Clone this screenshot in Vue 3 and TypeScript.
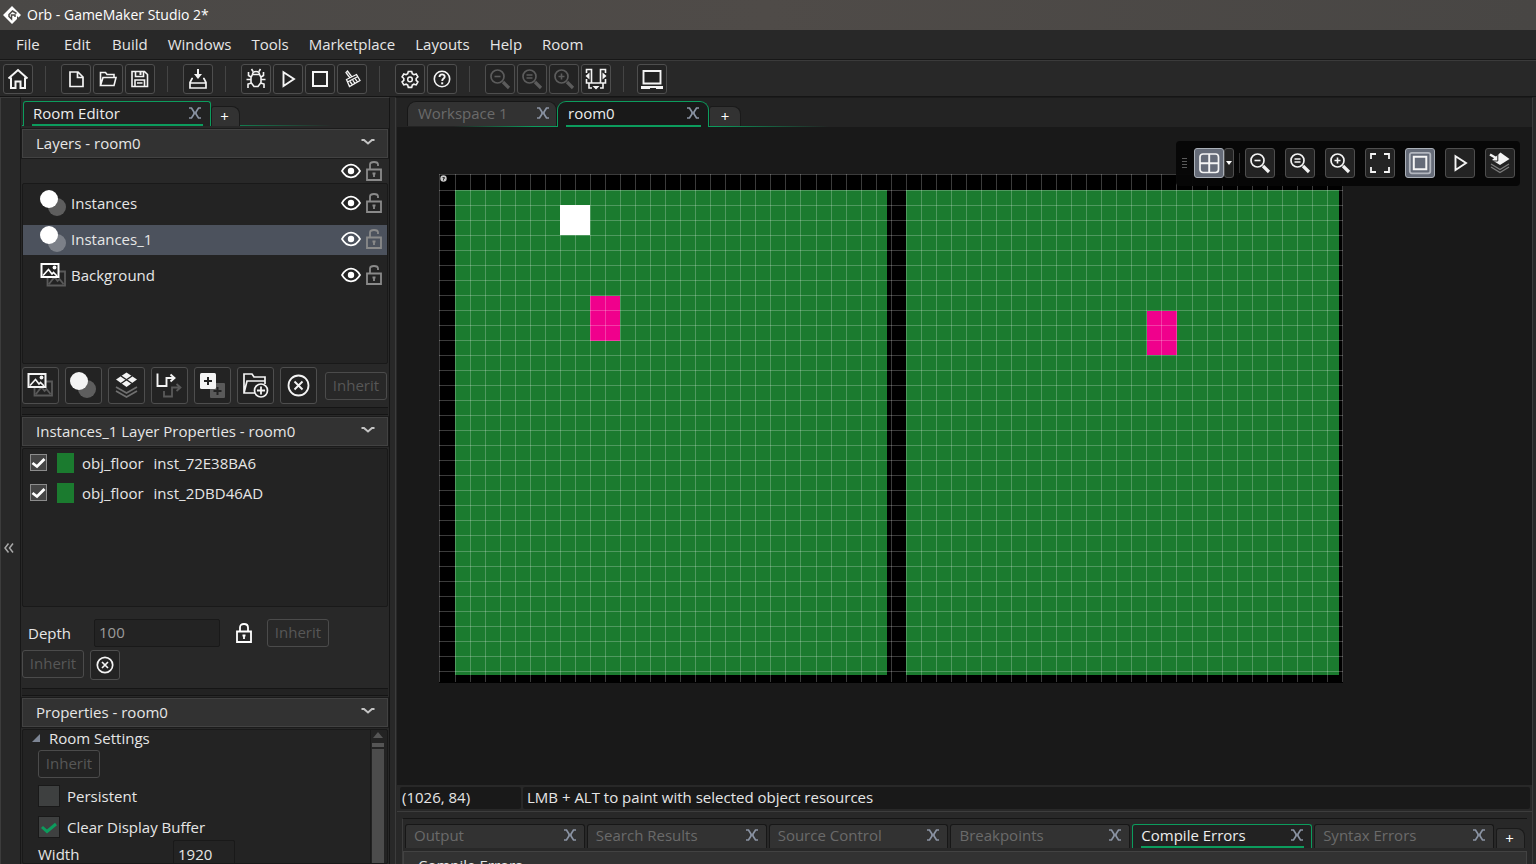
<script setup lang="ts">
import { ref } from 'vue'

interface Layer { name: string; kind: string }
interface Instance { object: string; id: string; enabled: boolean }

const menus = ['File', 'Edit', 'Build', 'Windows', 'Tools', 'Marketplace', 'Layouts', 'Help', 'Room']

const lens = '<circle cx="12.5" cy="12.5" r="6.5" stroke-width="1.7"/><path d="M18 18l6 6" stroke-width="3.2"/>'

const icons: Record<string, string> = {
  home: '<path d="M5.5 14.5L15 6l9.500 8.500M8 13.500V24h4.500v-6.500h5V24H22V13.500" stroke-width="2"/>',
  file: '<path d="M9 8h8l5 5v9.500H9zM16.500 8.500v5H22" stroke-width="1.700"/>',
  open: '<path d="M7.500 21.500V8.500h5l1.500 2h7v3M7.500 21.500l2.500-8h13l-2 8z" stroke-width="1.600"/>',
  save: '<path d="M7 7.500h12.500l3 3v12H7zM10.500 7.500v5h8v-5M10 22.500v-6.500h9.500v6.500M12 19h5.500" stroke-width="1.600"/><path d="M15.500 8v3" stroke-width="2"/>',
  export: '<path d="M10 14.500H9l-2 4V24h16v-5.500l-2-4h-1M7 19h16" stroke-width="1.700"/><path d="M15 5v8" stroke-width="2"/><path d="M11 10h8l-4 5z" fill="currentColor" stroke="none"/>',
  bug: '<path d="M11.500 10.500h7l1.500 3v5l-3 4h-4l-3-4v-5zM11.500 10.500c0-2 1.500-3 3.500-3s3.500 1 3.500 3M12 7.500l-1.500-2.500M18 7.500l1.500-2.500M10 13l-2.500-1.500V8M20 13l2.500-1.500V8M10 15.500H5.500M20 15.500h4.500M10.500 19L7 20v4M19.500 19l3.500 1v4" stroke-width="1.600"/>',
  play: '<path d="M10.500 8.200V22L21 15z" stroke-width="1.900"/>',
  stop: '<path d="M8 8h14v14H8z" stroke-width="2"/>',
  clean: '<path d="M9.500 15.500l10-5 3.500 6-10.500 6zM10.500 18l10.500-5.500M13 14L9 8.500l1.500-1.500 4 5.500M13 17.500l2.500 3.500M15.700 16.200l2.300 3.300M18.300 14.800l2.200 3.200" stroke-width="1.300"/>',
  gear: '<path d="M13.300 7.500h3.400l.600 2.300 1.600.900 2.300-.700 1.700 2.900-1.700 1.600v1.900l1.700 1.600-1.700 2.900-2.300-.700-1.600.900-.600 2.300h-3.400l-.600-2.300-1.600-.900-2.300.700L7.100 18l1.700-1.600v-1.900l-1.700-1.600L8.800 10l2.300.700 1.600-.900z" stroke-width="1.600"/><circle cx="15" cy="15.400" r="2.300" stroke-width="1.500"/>',
  help: '<circle cx="15" cy="15" r="7.700" stroke-width="1.600"/><path d="M12.500 13c0-3.500 5.200-3.300 5.200-.300 0 1.900-2.500 1.800-2.500 4.300" stroke-width="1.900"/><path d="M14.200 18.300h2v2h-2z" fill="currentColor" stroke="none"/>',
  zoomOut: lens + '<path d="M9.500 12.500h6" stroke-width="1.600"/>',
  zoomReset: lens + '<path d="M9.500 11h6M9.500 14h6" stroke-width="1.500"/>',
  zoomIn: lens + '<path d="M9.500 12.500h6M12.500 9.500v6" stroke-width="1.600"/>',
  dock: '<path d="M5.500 9V5.500h5V19h9V5.500h5V9M5.500 15v4h5M24.500 15v4h-5M11 24H8v-4.500M19 24h3v-4.500" stroke-width="1.600"/><path d="M4.500 12l4-3.500v7zM25.500 12l-4-3.500v7zM11.500 22h7L15 25.500z" fill="currentColor" stroke="none"/>',
  laptop: '<path d="M6.500 7h17v12.500h-17z" stroke-width="1.900"/><path d="M4 23.500h22" stroke-width="3"/><path d="M13 24.500h6" stroke="#252525" stroke-width="1"/>',
  grid: '<rect x="6" y="6" width="18.500" height="18.500" rx="3" stroke-width="1.700"/><path d="M15.200 6v18.500M6 15.200h18.500" stroke-width="1.900"/>',
  fit: '<path d="M6 11V6h5M19 6h5v5M24 19v5h-5M11 24H6v-5" stroke-width="1.800"/>',
  frame: '<rect x="4.800" y="4.800" width="20.500" height="20.500" rx="2" stroke="#b3b7bf" stroke-width="1.800"/><path d="M8.800 8.800h12.500v12.500H8.800z" stroke-width="2"/>',
  stack: '<path d="M6 19l9 5.500 9-5.500M6 16l9 5.500 9-5.500" stroke="#7b7b7b" stroke-width="1.400"/><path d="M15.500 4.500l9 6.500-9.500 6-8-5z" fill="currentColor" stroke="none"/><path d="M5 6.500l6 3.500" stroke-width="2.400"/><path d="M12.800 6v7H7" stroke="#232323" stroke-width="1"/>',
  image: '<path d="M12.500 14.500h17.500v14H12.500zM14 27l5.500-7 3 4 2-2 4 5" stroke="#5a5a5a" stroke-width="1.800"/><path d="M6.500 7h17v13h-17z" stroke-width="2" fill="#232323"/><path d="M8 18.500l5.500-6 3.500 4.500 1.500-1.500 3.500 3.500" stroke-width="1.600"/><circle cx="19.500" cy="10.500" r="1.900" fill="currentColor" stroke="none"/>',
  circles: '<circle cx="22" cy="22" r="9" fill="#fff" fill-opacity=".27" stroke="none"/><circle cx="14" cy="14" r="9" fill="currentColor" stroke="none"/>',
  tiles: '<path d="M8 20l10.500 6L29 20M8 24l10.500 6L29 24" stroke="#707070" stroke-width="1.700"/><path d="M18.500 5.500L29 12.500l-10.500 7.500L8 12.500z" fill="currentColor" stroke="none"/><path d="M13 9l11 7.500M24 9l-11 7.500" stroke="#232323" stroke-width="1.500"/>',
  path: '<path d="M13 24v5.500h8V20.500h7M25.500 17l4 3.500-4 3.500" stroke="#5a5a5a" stroke-width="1.800"/><path d="M6.500 6.500v12.500h9v-8h7M19.500 7.500l4 3.500-4 3.500" stroke-width="1.900"/>',
  assets: '<rect x="16" y="16" width="15" height="15" rx="1" fill="#5a5a5a" stroke="none"/><path d="M19.500 24h8M23.500 20v8" stroke="#232323" stroke-width="2"/><rect x="6" y="6" width="16" height="16" rx="1.500" fill="currentColor" stroke="none"/><path d="M10 14h8M14 10v8" stroke="#232323" stroke-width="2"/>',
  folder: '<path d="M18 26H7V7h8l2 3h11v7M7 26l3-12h17M10 14h18" stroke-width="1.700"/><circle cx="24" cy="23.500" r="6.500" fill="#232323" stroke-width="1.700"/><path d="M20 23.500h8M24 19.500v8" stroke-width="1.800"/>',
  remove: '<circle cx="18.500" cy="18.500" r="10" stroke-width="1.800"/><path d="M14.500 14.500l8 8M22.500 14.500l-8 8" stroke-width="1.900"/>',
  removeSmall: '<circle cx="15" cy="15" r="7.700" stroke-width="1.700"/><path d="M12 12l6 6M18 12l-6 6" stroke-width="1.700"/>',
}

const toolGroups: { icon: string; label: string; dim?: boolean }[][] = [
  [{ icon: 'home', label: 'Start page' }],
  [{ icon: 'file', label: 'New project' }, { icon: 'open', label: 'Open project' }, { icon: 'save', label: 'Save project' }],
  [{ icon: 'export', label: 'Create executable' }],
  [{ icon: 'bug', label: 'Debug' }, { icon: 'play', label: 'Run' }, { icon: 'stop', label: 'Stop' }, { icon: 'clean', label: 'Clean' }],
  [{ icon: 'gear', label: 'Game options' }, { icon: 'help', label: 'Help' }],
  [{ icon: 'zoomOut', label: 'Zoom out', dim: true }, { icon: 'zoomReset', label: 'Reset zoom', dim: true }, { icon: 'zoomIn', label: 'Zoom in', dim: true }, { icon: 'dock', label: 'Docks' }],
  [{ icon: 'laptop', label: 'Laptop mode' }],
]

const canvasTools = [
  { icon: 'zoomOut', label: 'Zoom out' },
  { icon: 'zoomReset', label: 'Reset zoom' },
  { icon: 'zoomIn', label: 'Zoom in' },
  { icon: 'fit', label: 'Fit to view' },
  { icon: 'frame', label: 'Room bounds', on: true },
  { icon: 'play', label: 'Play animation' },
  { icon: 'stack', label: 'Layer selection' },
]

const layerTools = ['image', 'circles', 'tiles', 'path', 'assets', 'folder', 'remove']
const layers: Layer[] = [
  { name: 'Instances', kind: 'circles' },
  { name: 'Instances_1', kind: 'circles' },
  { name: 'Background', kind: 'image' },
]
const activeLayer = ref('Instances_1')

const instances = ref<Instance[]>([
  { object: 'obj_floor', id: 'inst_72E38BA6', enabled: true },
  { object: 'obj_floor', id: 'inst_2DBD46AD', enabled: true },
])

const depth = ref('100')
const roomWidth = ref('1920')
const persistent = ref(false)
const clearBuffer = ref(true)

const outputTabs = ['Output', 'Search Results', 'Source Control', 'Breakpoints', 'Compile Errors', 'Syntax Errors']
const activeOutput = ref('Compile Errors')

// 32-unit grid of a 1920x1080 room at 47% zoom
const CELL = 15.04
const columns = Array.from({ length: 61 }, (_, i) => (i === 0 ? 0 : 1 + Math.floor(i * CELL)))
const rows = Array.from({ length: 34 }, (_, i) => (i === 0 ? 0 : 1 + Math.floor(i * CELL)))
</script>

<template>
  <div class="app">
    <header class="title">
      <svg class="logo" viewBox="0 0 18 18"><path d="M9 0l9 9-2.500 2.500L14 10v3l-5 5-9-9z" fill="#fff" /><path d="M13.500 7.500L9.500 5 6 8.500v2L8.500 13v-4H12v2" fill="none" stroke="#4b4947" stroke-width="1.500" /></svg>
      <span>Orb - GameMaker Studio 2*</span>
    </header>

    <nav class="menu">
      <button v-for="m in menus" :key="m" type="button">{{ m }}</button>
    </nav>

    <div class="toolbar">
      <div v-for="(g, i) in toolGroups" :key="i" class="group">
        <button v-for="t in g" :key="t.icon" type="button" class="tool" :class="{ dim: t.dim }" :aria-label="t.label">
          <svg viewBox="0 0 30 30" v-html="icons[t.icon]" />
        </button>
      </div>
    </div>

    <div class="body">
      <button type="button" class="rail" aria-label="Expand left dock">
        <svg viewBox="0 0 10 10"><path d="M4.500 0.500L1 5l3.500 4.500M9 .5L5.500 5 9 9.500" /></svg>
      </button>

      <aside class="side">
        <div class="tabs side-tabs">
          <div class="tab active"><span>Room Editor</span><button type="button" class="close" aria-label="Close"><svg viewBox="0 0 12 12"><path d="M0 1h2.500L5 5v2l-2.500 4H0M12 1H9.500L7 5v2l2.500 4H12M5 6h2" /></svg></button></div>
          <button type="button" class="plus">+</button>
        </div>

        <button type="button" class="head">Layers - room0<svg viewBox="0 0 14 7"><path d="M.5 1H3l4 3.500L11 1h2.500" /></svg></button>
        <div class="all-layers">
          <svg class="eye" viewBox="0 0 20 16"><path d="M1 8c5-8.500 13-8.500 18 0-5 8.500-13 8.500-18 0z" /><circle cx="10" cy="8" r="3.200" /></svg>
          <svg class="lock" viewBox="0 0 16 20"><path d="M4 8V3.500Q4 1 8 1t4 2.500V5M1 8.500h14v10.500H1z" /><path d="M8 11.500v4.500M6.500 12.500h3" /></svg>
        </div>
        <div class="well layer-list">
          <div v-for="l in layers" :key="l.name" class="layer" :class="{ selected: l.name === activeLayer }" @click="activeLayer = l.name">
            <svg class="kind" viewBox="5 5 26 26" v-html="icons[l.kind]" />
            <span>{{ l.name }}</span>
            <svg class="eye" viewBox="0 0 20 16"><path d="M1 8c5-8.500 13-8.500 18 0-5 8.500-13 8.500-18 0z" /><circle cx="10" cy="8" r="3.200" /></svg>
            <svg class="lock" viewBox="0 0 16 20"><path d="M4 8V3.500Q4 1 8 1t4 2.500V5M1 8.500h14v10.500H1z" /><path d="M8 11.500v4.500M6.500 12.500h3" /></svg>
          </div>
        </div>
        <div class="layer-tools">
          <button v-for="t in layerTools" :key="t" type="button" class="tool big" :aria-label="t"><svg viewBox="0 0 37 37" v-html="icons[t]" /></button>
          <button type="button" class="inherit" disabled>Inherit</button>
        </div>
        <div class="divider" />

        <button type="button" class="head">Instances_1 Layer Properties - room0<svg viewBox="0 0 14 7"><path d="M.5 1H3l4 3.500L11 1h2.500" /></svg></button>
        <div class="well instance-list">
          <label v-for="inst in instances" :key="inst.id" class="instance">
            <input v-model="inst.enabled" type="checkbox" />
            <svg class="tick" viewBox="0 0 17 17"><path v-if="inst.enabled" d="M2.500 9l4.500 3.500L14.500 5" /></svg>
            <i class="swatch" /><span class="obj">{{ inst.object }}</span><span>{{ inst.id }}</span>
          </label>
        </div>
        <div class="depth">
          <label for="depth">Depth</label>
          <input id="depth" v-model="depth" type="text" />
          <svg class="lock" viewBox="0 0 16 20"><path d="M4 8V4.500Q4 1 8 1t4 3.500V8M1 8.500h14v10.500H1z" /><path d="M8 11.500v4.500M6.500 12.500h3" /></svg>
          <button type="button" class="inherit" disabled>Inherit</button>
        </div>
        <div class="inherit-row">
          <button type="button" class="inherit" disabled>Inherit</button>
          <button type="button" class="tool" aria-label="Clear"><svg viewBox="0 0 30 30" v-html="icons.removeSmall" /></button>
        </div>
        <div class="divider" />

        <button type="button" class="head">Properties - room0<svg viewBox="0 0 14 7"><path d="M.5 1H3l4 3.500L11 1h2.500" /></svg></button>
        <div class="well settings">
          <div class="settings-body">
            <div class="section"><svg viewBox="0 0 8 8"><path d="M8 0v8H0z" /></svg>Room Settings</div>
            <button type="button" class="inherit" disabled>Inherit</button>
            <label class="check"><input v-model="persistent" type="checkbox" /><svg viewBox="0 0 20 20"><path v-if="persistent" d="M3 10l5 4.500L17 7" /></svg>Persistent</label>
            <label class="check"><input v-model="clearBuffer" type="checkbox" /><svg viewBox="0 0 20 20"><path v-if="clearBuffer" d="M3 10l5 4.500L17 7" /></svg>Clear Display Buffer</label>
            <div class="field"><label for="room-width">Width</label><input id="room-width" v-model="roomWidth" type="text" /></div>
          </div>
          <div class="scroll"><svg viewBox="0 0 10 6"><path d="M5 0l5 6H0z" /></svg><i class="nub" /><i class="thumb" /></div>
        </div>
      </aside>

      <main class="main">
        <div class="tabs work-tabs">
          <div class="tab round first"><span>Workspace 1</span><button type="button" class="close" aria-label="Close"><svg viewBox="0 0 12 12"><path d="M0 1h2.500L5 5v2l-2.500 4H0M12 1H9.500L7 5v2l2.500 4H12M5 6h2" /></svg></button></div>
          <div class="tab round active"><span>room0</span><button type="button" class="close" aria-label="Close"><svg viewBox="0 0 12 12"><path d="M0 1h2.500L5 5v2l-2.500 4H0M12 1H9.500L7 5v2l2.500 4H12M5 6h2" /></svg></button></div>
          <button type="button" class="plus">+</button>
        </div>

        <section class="canvas">
          <svg class="room" width="904" height="509" viewBox="0 0 904 509" shape-rendering="crispEdges">
            <rect width="904" height="509" fill="#000" />
            <rect x="16" y="16" width="432" height="485" fill="#1b7b2f" />
            <rect x="467" y="16" width="433" height="485" fill="#1b7b2f" />
            <rect x="151" y="122" width="30" height="45" fill="#f0008c" />
            <rect x="708" y="137" width="30" height="44" fill="#f0008c" />
            <g fill="#fff" fill-opacity=".23">
              <rect v-for="x in columns" :key="'c' + x" :x="x" y="0" width="1" height="508" />
              <rect v-for="y in rows" :key="'r' + y" x="0" :y="y" width="904" height="1" />
            </g>
            <rect x="121" y="31" width="30" height="30" fill="#fff" />
            <circle cx="4.500" cy="4.500" r="3.200" fill="#c8c8c8" shape-rendering="auto" />
            <path class="mark" d="M3.500 3.500h2v1h-1v2" shape-rendering="auto" />
          </svg>

          <div class="floating">
            <span class="grip"><i /><i /><i /><i /></span>
            <span class="split">
              <button type="button" class="tool on" aria-label="Toggle grid"><svg viewBox="0 0 30 30" v-html="icons.grid" /></button>
              <button type="button" class="drop" aria-label="Grid options"><svg viewBox="0 0 6 4"><path d="M0 0h6L3 4z" /></svg></button>
            </span>
            <i class="bar" />
            <span class="canvas-tools">
              <button v-for="t in canvasTools" :key="t.icon" type="button" class="tool" :class="{ on: t.on }" :aria-label="t.label"><svg viewBox="0 0 30 30" v-html="icons[t.icon]" /></button>
            </span>
          </div>
        </section>

        <div class="status"><span class="coords">(1026, 84)</span><span class="hint">LMB + ALT to paint with selected object resources</span></div>

        <section class="output">
          <div class="tabs out-tabs">
            <div v-for="t in outputTabs" :key="t" class="tab" :class="{ active: t === activeOutput }" @click="activeOutput = t">
              <span>{{ t }}</span><button type="button" class="close" aria-label="Close"><svg viewBox="0 0 12 12"><path d="M0 1h2.500L5 5v2l-2.500 4H0M12 1H9.500L7 5v2l2.500 4H12M5 6h2" /></svg></button>
            </div>
            <button type="button" class="plus">+</button>
          </div>
          <div class="out-head">{{ activeOutput }}</div>
        </section>
      </main>
    </div>
  </div>
</template>

<style>
html, body { margin: 0; overflow: hidden; background: #282828; }
</style>

<style scoped>
* { box-sizing: border-box; }
.app { height: 100vh; display: flex; flex-direction: column; overflow: hidden; background: #282828; color: #e6e6e6; font: 15px/20px "Open Sans", "Noto Sans", sans-serif; }
button, input { font: inherit; color: inherit; margin: 0; padding: 0; border: 0; background: none; }
svg { display: block; fill: none; stroke: currentColor; flex: none; }

.title { height: 30px; flex: none; display: flex; align-items: center; gap: 6px; padding-left: 3px; background: linear-gradient(90deg, #4a4846, #4f4b48 50%, #484644); color: #fff; font-size: 14px; }
.logo { width: 18px; height: 18px; stroke: none; }
.menu { height: 30px; flex: none; display: flex; align-items: center; gap: 20px; padding: 0 0 2px 16px; border-bottom: 1px solid #171717; }
.menu button { min-width: 28px; text-align: left; }
.toolbar { height: 37px; flex: none; display: flex; align-items: center; padding-left: 3px; border-top: 1px solid #3b3b3b; border-bottom: 1px solid #151515; }
.group { display: flex; gap: 2px; align-items: center; }
.group + .group::before { content: ""; width: 1px; height: 26px; margin: 0 13px 0 12px; background: #444; }
.group:last-child::before { margin-right: 11px; }
.tool { width: 30px; height: 30px; flex: none; border: 1px solid #4e4e4e; border-radius: 3px; background: #232323; color: #f4f4f4; }
.tool svg { width: 30px; height: 30px; margin: -1px; }
.tool.big { width: 37px; height: 37px; }
.tool.big svg { width: 37px; height: 37px; }
.tool.dim { color: #5c5c5c; }
.tool.on { background: #656b78; border-color: #aab0b8; }

.body { flex: 1; min-height: 0; display: flex; }
.rail { width: 21px; flex: none; border-left: 1px solid #3c3c3c; border-right: 1px solid #171717; border-top: 1px solid #3c3c3c; display: flex; align-items: center; justify-content: center; padding-top: 134px; color: #a8a8a8; }
.rail svg { width: 10px; height: 10px; margin-right: 4px; stroke-width: 1.500; }
.side { width: 369px; flex: none; display: flex; flex-direction: column; padding: 0 1px; border-right: 1px solid #151515; border-top: 1px solid #3c3c3c; }

.tabs { display: flex; align-items: flex-end; flex: none; }
.tab { position: relative; display: flex; align-items: center; justify-content: space-between; height: 24px; padding: 0 8px 3px 9px; background: #323232; border: 1px solid #171717; border-bottom: 0; border-radius: 3px 3px 0 0; color: #6a6a6a; }
.tab.active { background: #222; border-color: #0c9c5d; color: #ececec; }
.tab.active::after { content: ""; position: absolute; left: 8px; right: 7px; bottom: 0; height: 2px; background: #0c9c5d; }
.close { display: block; width: 12px; height: 12px; color: #8a93a3; }
.close svg { width: 12px; height: 12px; stroke-width: 1.700; }
.plus { width: 29px; height: 20px; padding: 0 2px 2px 0; line-height: 16px; background: #323232; border: 1px solid #1a1a1a; border-bottom: 0; border-radius: 3px 8px 0 0; text-align: center; color: #fff; }
.side-tabs { height: 30px; padding: 4px 0 2px 1px; background: linear-gradient(90deg, #0c9c5d 50%, transparent 85%) no-repeat 0 27px / 100% 1px; }
.side-tabs .tab { width: 188px; height: 25px; padding-right: 9px; }

.head { display: flex; align-items: center; justify-content: space-between; height: 29px; flex: none; margin-top: 2px; padding: 0 12px 2px 13px; background: #323232; border: 1px solid #424242; outline: 1px solid #1b1b1b; text-align: left; }
.side-tabs + .head { margin-top: 1px; }
.head svg { width: 14px; height: 7px; stroke-width: 2; color: #c4c4c4; }
.all-layers { height: 25px; flex: none; display: flex; align-items: center; justify-content: flex-end; gap: 5px; padding: 1px 6px 0 0; }
.eye { width: 20px; height: 16px; stroke-width: 1.700; color: #fff; }
.eye circle { fill: #fff; stroke: none; }
.lock { width: 16px; height: 20px; stroke-width: 1.800; color: #8a8a8a; }
.well { background: #232323; border: 1px solid #191919; border-radius: 2px; flex: none; }
.layer-list { height: 181px; padding-top: 5px; display: flex; flex-direction: column; gap: 6px; }
.layer { display: flex; align-items: center; gap: 5px; height: 30px; padding: 0 5px 2px 17px; }
.layer span { flex: 1; }
.layer.selected { background: #4c525d; }
.kind { width: 26px; height: 26px; color: #fff; }
.layer-tools { display: flex; align-items: center; gap: 6px; height: 43px; flex: none; }
.inherit { width: 62px; height: 28px; flex: none; border: 1px solid #4b4b4b; border-radius: 3px; color: #575757; line-height: 24px; padding-bottom: 2px; }
.layer-tools .inherit { margin-left: 2px; }
.divider { height: 8px; flex: none; background: #222; border: 1px solid #151515; border-width: 1px 0; }
.instance-list { height: 159px; margin-top: 2px; }
.instance { position: relative; display: flex; align-items: center; height: 30px; padding: 0 0 3px 7px; }
.instance input, .check input { position: absolute; opacity: 0; width: 17px; height: 17px; }
.tick { width: 17px; height: 17px; background: #454545; outline: 1px solid #8c8c8c; outline-offset: -1px; stroke: #fff; stroke-width: 2.800; }
.swatch { width: 17px; height: 20px; margin: 0 8px 0 10px; background: #1b7b2f; }
.obj { margin-right: 10px; }
.depth { display: flex; align-items: center; height: 43px; flex: none; padding: 8px 0 0 6px; }
.depth label { width: 66px; }
.depth input { width: 126px; height: 28px; padding: 0 4px 2px; background: #232323; border: 1px solid #191919; border-radius: 2px; color: #9b9b9b; }
.depth .lock { margin: 0 15px 0 16px; color: #fff; }
.inherit-row { display: flex; gap: 6px; height: 38px; flex: none; }
.settings { flex: 1; min-height: 0; margin-top: 2px; display: flex; overflow: hidden; }
.settings-body { flex: 1; padding-left: 15px; }
.section { display: flex; align-items: center; gap: 9px; margin: -2px 0 2px -6px; }
.section svg { width: 8px; height: 8px; fill: #7d8594; stroke: none; }
.check { position: relative; display: flex; align-items: center; gap: 8px; height: 31px; }
.check svg { width: 20px; height: 20px; margin-left: 1px; background: #3e4040; outline: 1px solid #191919; stroke: #0c9c5d; stroke-width: 3; }
.settings-body .inherit { display: block; margin-bottom: 2px; }
.field { display: flex; align-items: center; height: 24px; }
.field label { width: 135px; }
.field input { width: 62px; height: 28px; padding: 0 4px; border: 1px solid #191919; border-radius: 2px; }
.scroll { width: 17px; display: flex; flex-direction: column; align-items: center; gap: 2px; padding: 2px 3px 0 0; border-left: 1px solid #191919; }
.scroll svg { width: 10px; height: 6px; fill: #555; stroke: none; }
.nub { width: 12px; height: 4px; margin-top: 3px; background: #555; }
.thumb { width: 12px; flex: 1; background: #4c4c4c; }

.main { flex: 1; min-width: 0; display: flex; flex-direction: column; margin-left: 5px; margin-right: 3px; border-left: 1px solid #3c3c3c; border-top: 1px solid #1b1b1b; border-right: 1px solid #3c3c3c; padding-left: 1px; }
.work-tabs { height: 29px; padding-left: 10px; background: linear-gradient(90deg, transparent 5%, #0c9c5d 12%, #0c9c5d 28%, transparent 38%) no-repeat 0 28px / 100% 1px, #232323; }
.tab.round { border-radius: 9px 9px 0 0; height: 26px; width: 152px; }
.tab.round.first { width: 150px; height: 25px; padding-right: 7px; margin-bottom: 1px; padding-left: 10px; }
.tab.round.active { padding-left: 10px; padding-right: 9px; background: #191919; }
.work-tabs .plus { width: 32px; padding-right: 0; margin-bottom: 1px; }
.canvas { position: relative; flex: 1; min-height: 0; overflow: hidden; background: #191919; padding: 47px 0 0 42px; }
.room { stroke: none; }
.mark { stroke: #333; }
.floating { position: absolute; top: 14px; right: 12px; height: 45px; display: flex; align-items: center; padding: 0 5px 1px 6px; background: rgba(6, 6, 6, .96); border-radius: 4px; }
.grip { display: flex; flex-direction: column; gap: 2px; margin-right: 7px; }
.grip i { width: 5px; height: 1px; background: #5a5a5a; }
.split { display: flex; }
.drop { width: 10px; height: 30px; border: 1px solid #4e4e4e; border-radius: 3px; background: #232323; color: #fff; }
.drop svg { width: 6px; height: 4px; margin: 0 1px; fill: #fff; stroke: none; }
.bar { width: 1px; height: 20px; margin: 0 5px; background: #333; }
.canvas-tools { display: flex; gap: 10px; }
.status { display: flex; gap: 2px; height: 27px; flex: none; padding: 2px 2px 2px 3px; border-bottom: 1px solid #3d3d3d; }
.status span { background: #191919; border-radius: 2px; padding-left: 2px; line-height: 20px; }
.coords { width: 121px; }
.hint { flex: 1; }
.status .hint { padding-left: 4px; }
.output { height: 46px; flex: none; margin: 6px 5px 0; border-top: 1px solid #151515; border-left: 1px solid #3c3c3c; overflow: hidden; }
.out-tabs { gap: 2px; padding: 5px 2px 0 2px; }
.out-tabs .tab { flex: 1; padding-left: 8px; }
.out-head { height: 29px; margin-top: 3px; padding: 3px 14px; background: #323232; border: 1px solid #424242; }
</style>
